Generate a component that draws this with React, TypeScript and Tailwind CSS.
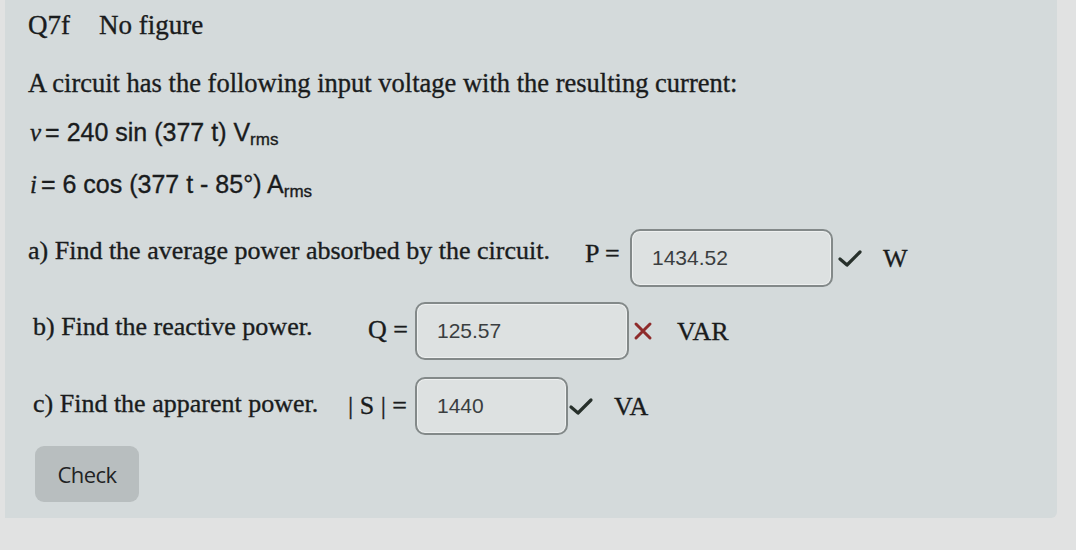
import React from "react";

const serif = { fontFamily: '"Liberation Serif", "Times New Roman", serif' };
const narrow = { fontFamily: '"Liberation Sans", Arial, sans-serif' };
const sans = { fontFamily: '"Open Sans", "Noto Sans", sans-serif' };

function Tick() {
  return (
    <svg width="26" height="22" viewBox="0 0 26 22" className="shrink-0">
      <path d="M3 12 L10 18 L23 5" fill="none" stroke="#27302b" strokeWidth="3.2" strokeLinecap="round" strokeLinejoin="round" />
    </svg>
  );
}

function Cross() {
  return (
    <svg width="24" height="22" viewBox="0 0 24 22" className="shrink-0">
      <path d="M5 4 L19 18 M19 4 L5 18" fill="none" stroke="#8e2b2b" strokeWidth="3" strokeLinecap="round" />
    </svg>
  );
}

function Answer({ value, width }: { value: string; width: string }) {
  return (
    <div
      className={`${width} h-[58px] rounded-[10px] border-2 border-[#838989] bg-[#dde1e1] shadow-[inset_0_0_0_1px_#eef0f0] flex items-center pl-[20px] text-[21px] text-[#3a3e40] [-webkit-text-stroke:0px]`}
      style={narrow}
    >
      {value}
    </div>
  );
}

export default function App() {
  return (
    <div className="w-[1076px] h-[550px] bg-[#e1e2e2] overflow-hidden">
      <div className="ml-[5px] w-[1052px] h-[518px] bg-[#d4dadb] rounded-br-[6px] pl-[23px] pt-[10px] text-[#1a1c1d] [-webkit-text-stroke:0.35px_#1a1c1d]">
        <div className="flex h-[30px] items-center text-[27px]" style={serif}>
          <span>Q7f</span>
          <span className="ml-[29px]">No figure</span>
        </div>

        <div className="mt-[29px] h-[30px] flex items-center text-[26.5px]" style={serif}>
          A circuit has the following input voltage with the resulting current:
        </div>

        <div className="mt-[19px] ml-[2px] h-[30px] flex items-center text-[25px]" style={narrow}>
          <span className="italic" style={serif}>v</span>
          <span className="ml-[4px]">= 240 sin (377 t) V</span>
          <span className="text-[17px] relative top-[7px]">rms</span>
        </div>

        <div className="mt-[22px] ml-[2px] h-[30px] flex items-center text-[25px]" style={narrow}>
          <span className="italic" style={serif}>i</span>
          <span className="ml-[4px]">= 6 cos (377 t - 85°) A</span>
          <span className="text-[17px] relative top-[7px]">rms</span>
        </div>

        <div className="mt-[29px] flex items-center text-[26px]" style={serif}>
          <span className="w-[557px] relative -top-[8px]">a) Find the average power absorbed by the circuit.</span>
          <span className="w-[45px] relative -top-[5px]">P =</span>
          <Answer value="1434.52" width="w-[203px]" />
          <span className="ml-[4px]"><Tick /></span>
          <span className="ml-[20px]">W</span>
        </div>

        <div className="mt-[15px] ml-[5px] flex items-center text-[26px]" style={serif}>
          <span className="w-[335px] relative -top-[5px]">b) Find the reactive power.</span>
          <span className="w-[47px] relative -top-[2px]">Q =</span>
          <Answer value="125.57" width="w-[214px]" />
          <span className="ml-[2px]"><Cross /></span>
          <span className="ml-[22px]">VAR</span>
        </div>

        <div className="mt-[17px] ml-[5px] flex items-center text-[26px]" style={serif}>
          <span className="w-[315px] relative -top-[3px]">c) Find the apparent power.</span>
          <span className="w-[67px] relative -top-[1px]">| S | =</span>
          <Answer value="1440" width="w-[153px]" />
          <span><Tick /></span>
          <span className="ml-[20px]">VA</span>
        </div>

        <button
          className="mt-[11px] ml-[7px] w-[104px] h-[56px] rounded-[9px] bg-[#b8bebf] text-[22px] text-[#1f2324] tracking-tight [-webkit-text-stroke:0px]"
          style={sans}
        >
          Check
        </button>
      </div>
    </div>
  );
}
